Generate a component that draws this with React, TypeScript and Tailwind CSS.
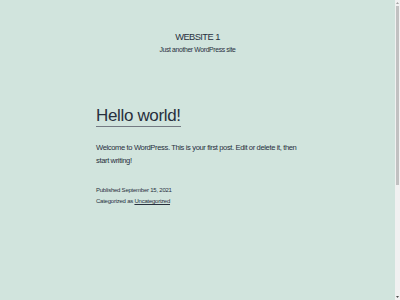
function Scrollbar() {
  return (
    <div className="flex h-full w-[5px] flex-col items-center bg-[#f1f1f1]">
      <svg width="5" height="6" viewBox="0 0 5 6" className="shrink-0">
        <path d="M1 4 L2.5 2 L4 4 Z" fill="#a3a3a3" />
      </svg>
      <div className="h-[179px] w-[3px] bg-[#c1c1c1]" />
      <div className="flex-1" />
      <svg width="5" height="6" viewBox="0 0 5 6" className="shrink-0">
        <path d="M1 2 L2.5 4 L4 2 Z" fill="#505050" />
      </svg>
    </div>
  );
}

export default function App() {
  return (
    <div
      className="flex h-[300px] overflow-hidden bg-[#d1e4dd] text-[#28303d]"
      style={{ fontFamily: '"Liberation Sans", Arial, sans-serif' }}
    >
      <div className="flex-1">
        <header className="flex flex-col items-center pt-[31px]">
          <h1 className="text-[9.3px] leading-[12px] tracking-[-0.06em]">WEBSITE 1</h1>
          <p className="mt-[2px] text-[6.8px] leading-[10px] tracking-[-0.05em]">
            Just another WordPress site
          </p>
        </header>

        <main className="ml-[96px] mt-[49px] w-[208px]">
          <h2 className="inline-block border-b border-[#737a82] text-[17px] leading-[20px] tracking-[-0.02em]">
            Hello world!
          </h2>
          <p className="mt-[13px] text-[7.6px] leading-[13px] tracking-[-0.05em]">
            Welcome to WordPress. This is your first post. Edit or delete it, then start writing!
          </p>
          <div className="mt-[18px] text-[6px] leading-[11px] tracking-[-0.04em]">
            <p>Published September 15, 2021</p>
            <p>
              Categorized as <span className="underline underline-offset-1">Uncategorized</span>
            </p>
          </div>
        </main>
      </div>
      <Scrollbar />
    </div>
  );
}
